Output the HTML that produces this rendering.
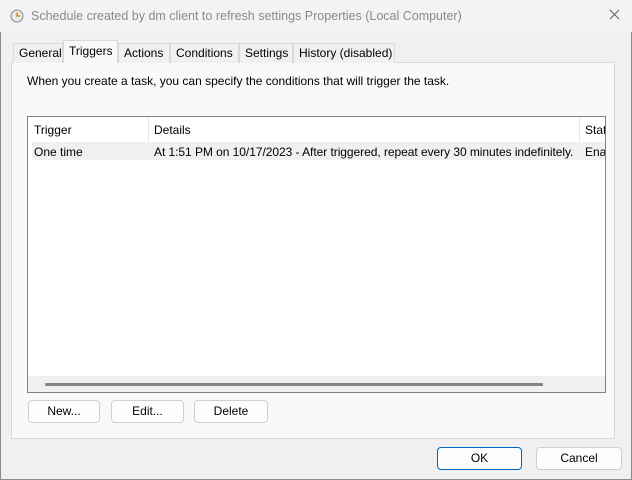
<!DOCTYPE html>
<html><head><style>
*{box-sizing:border-box;margin:0;padding:0}
body{width:632px;height:480px;background:#f0f0f0;font-family:"Liberation Sans",sans-serif;font-size:12px;color:#000;position:relative;overflow:hidden}
.abs{position:absolute}
.title{left:0;top:0;width:632px;height:32px;background:#f3f3f3}
.tab{position:absolute;top:43px;height:20px;border:1px solid #d9d9d9;border-bottom:none;background:#f0f0f0;padding:2px 5px 0 5px;white-space:nowrap}
.btn{position:absolute;background:#fdfdfd;border:1px solid #d0d0d0;border-radius:4px;text-align:center;line-height:20px}
</style></head><body>
<div class="abs" style="left:0;top:0;width:632px;height:480px;border:1px solid #8a8a8a;border-top:none"></div>
<div class="abs title"></div>
<svg class="abs" style="left:10px;top:9px" width="14" height="14" viewBox="0 0 14 14"><circle cx="7" cy="7" r="6" fill="#e8e8e8" stroke="#8c8c8c"/><path d="M7 3.5V7h3" stroke="#c08a00" stroke-width="1.3" fill="none"/></svg>
<div class="abs" style="left:31px;top:9px;color:#8a8a8a;font-size:12.5px">Schedule created by dm client to refresh settings Properties (Local Computer)</div>
<svg class="abs" style="left:609px;top:9px" width="11" height="11" viewBox="0 0 11 11"><path d="M1 1L10 10M10 1L1 10" stroke="#666" stroke-width="1.1"/></svg>
<div class="abs" style="left:11px;top:62px;width:604px;height:377px;background:#f9f9f9;border:1px solid #d9d9d9"></div>
<div class="tab" style="left:13px;width:50px">General</div>
<div class="tab" style="left:63px;top:40px;height:23px;width:55px;background:#f9f9f9;padding-top:3px;z-index:2">Triggers</div>
<div class="tab" style="left:118px;width:52px">Actions</div>
<div class="tab" style="left:170px;width:69px">Conditions</div>
<div class="tab" style="left:239px;width:54px">Settings</div>
<div class="tab" style="left:293px;width:102px">History (disabled)</div>
<div class="abs" style="left:27px;top:74px">When you create a task, you can specify the conditions that will trigger the task.</div>
<div class="abs" style="left:27px;top:116px;width:579px;height:277px;background:#fff;border:1px solid #828282;overflow:hidden">
 <div class="abs" style="left:120px;top:0;width:1px;height:24px;background:#e5e5e5"></div>
 <div class="abs" style="left:551px;top:0;width:1px;height:24px;background:#e5e5e5"></div>
 <div class="abs" style="left:6px;top:6px">Trigger</div>
 <div class="abs" style="left:126px;top:6px">Details</div>
 <div class="abs" style="left:557px;top:6px">Status</div>
 <div class="abs" style="left:4px;top:25px;width:580px;height:18px;background:#f0f0f0"></div>
 <div class="abs" style="left:6px;top:28px">One time</div>
 <div class="abs" style="left:126px;top:28px;white-space:nowrap;letter-spacing:-0.05px">At 1:51 PM on 10/17/2023 - After triggered, repeat every 30 minutes indefinitely.</div>
 <div class="abs" style="left:557px;top:28px">Enabled</div>
 <div class="abs" style="left:0;top:259px;width:579px;height:17px;background:#f0f0f0"></div>
 <div class="abs" style="left:17px;top:266px;width:498px;height:3px;background:#858585;border-radius:1px"></div>
</div>
<div class="btn" style="left:28px;top:400px;width:72px;height:23px">New...</div>
<div class="btn" style="left:111px;top:400px;width:73px;height:23px">Edit...</div>
<div class="btn" style="left:194px;top:400px;width:74px;height:23px">Delete</div>
<div class="btn" style="left:437px;top:447px;width:85px;height:23px;border:1px solid #0067c0">OK</div>
<div class="btn" style="left:536px;top:447px;width:86px;height:23px">Cancel</div>
</body></html>
